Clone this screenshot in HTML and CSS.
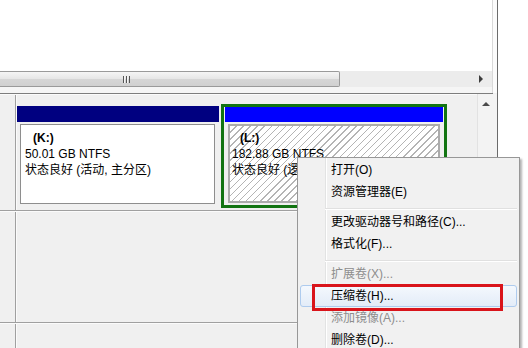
FILE: index.html
```html
<!DOCTYPE html>
<html>
<head>
<meta charset="utf-8">
<link rel="stylesheet" href="styles.css">
</head>
<body>
<div class="screen">
  <div class="win">
    <div class="upper">
      <div class="list"></div>
      <div class="edge"></div>
    </div>
    <div class="hbar">
      <div class="hscroll">
        <div class="thumb"><span class="grip"></span></div>
        <div class="track"></div>
        <div class="arrow-cell"><span class="arrow-right"></span></div>
      </div>
      <div class="edge"></div>
    </div>
    <div class="gap">
      <div class="gap-main"></div>
      <div class="edge"></div>
    </div>
    <div class="divider"></div>
    <div class="lower">
      <div class="rows">
        <div class="row disk-row">
          <div class="label-col"></div>
          <div class="parts">
            <div class="part part-k">
              <div class="cap cap-primary"></div>
              <div class="box">
                <div class="vol">(K:)</div>
                <div>50.01 GB NTFS</div>
                <div>状态良好 (活动, 主分区)</div>
              </div>
            </div>
            <div class="part part-l">
              <div class="cap cap-logical"></div>
              <div class="box hatch">
                <div class="vol">(L:)</div>
                <div>182.88 GB NTFS</div>
                <div>状态良好 (逻辑驱动器)</div>
              </div>
            </div>
          </div>
        </div>
        <div class="row empty-row">
          <div class="label-col"></div>
        </div>
        <div class="row last-row">
          <div class="label-col"></div>
        </div>
      </div>
      <div class="vscroll"><span class="arrow-up"></span></div>
    </div>
  </div>
  <div class="outside"></div>
</div>

<div class="menu">
  <div class="mi">打开(O)</div>
  <div class="mi">资源管理器(E)</div>
  <div class="sep"></div>
  <div class="mi">更改驱动器号和路径(C)...</div>
  <div class="mi">格式化(F)...</div>
  <div class="sep"></div>
  <div class="mi off">扩展卷(X)...</div>
  <div class="mi hot">压缩卷(H)...</div>
  <div class="mi off">添加镜像(A)...</div>
  <div class="mi">删除卷(D)...</div>
</div>
<div class="callout"></div>
</body>
</html>
```

FILE: styles.css
```css
* { box-sizing: border-box; }
html, body { margin: 0; padding: 0; }
body {
  width: 528px;
  height: 348px;
  overflow: hidden;
  position: relative;
  background: #fff;
  font-family: "Liberation Sans", "Noto Sans CJK SC", sans-serif;
  font-size: 12px;
  color: #000;
}
.screen { display: flex; height: 348px; }
.win {
  width: 498px;
  border-right: 1px solid #6b6b6b;
  display: flex;
  flex-direction: column;
  background: #f0f0f0;
}
.outside { flex: 1; background: #fff; }

.upper { height: 71px; display: flex; background: #fff; }
.list { width: 493px; border-right: 1px solid #d9d9d9; background: #fff; }
.edge { flex: 1; background: #fbfbfb; }

.hbar { height: 16px; display: flex; }
.hscroll {
  width: 493px;
  display: flex;
  background: #ececec;
  border-right: 1px solid #d9d9d9;
}
.thumb {
  width: 340px;
  height: 16px;
  border: 1px solid #9a9a9a;
  border-left: none;
  border-radius: 0 2px 2px 0;
  background: linear-gradient(#f5f5f5, #e6e6e6 50%, #d6d6d6 50%, #d0d0d0);
  display: flex;
  align-items: center;
  padding-left: 123px;
}
.grip {
  width: 7px;
  height: 7px;
  background: repeating-linear-gradient(90deg, #555 0 1px, #f4f4f4 1px 2px, transparent 2px 3px);
}
.track { flex: 1; }
.arrow-cell {
  width: 16px;
  display: flex;
  align-items: center;
  padding-left: 3px;
}
.arrow-right {
  width: 0;
  height: 0;
  border-left: 4px solid #3c3c3c;
  border-top: 4px solid transparent;
  border-bottom: 4px solid transparent;
}

.gap { height: 6px; display: flex; }
.gap-main { width: 493px; background: #f5f5f5; border-right: 1px solid #d9d9d9; }
.divider { height: 1px; width: 493px; background: #7d7d7d; }

.lower { flex: 1; display: flex; }
.rows { width: 477px; display: flex; flex-direction: column; }
.row { display: flex; }
.label-col {
  width: 16px;
  border-right: 1px solid #a0a0a0;
  box-shadow: 1px 0 0 #fbfbfb;
}
.disk-row {
  height: 117px;
  border-bottom: 1px solid #a0a0a0;
  border-top: 1px solid #fbfbfb;
}
.empty-row {
  height: 112px;
  border-top: 1px solid #fbfbfb;
  border-bottom: 1px solid #a0a0a0;
}
.last-row { flex: 1; border-top: 1px solid #fbfbfb; }

.parts {
  display: flex;
  align-items: flex-start;
  padding: 9px 0 0 1px;
}
.part { display: flex; flex-direction: column; }
.part-k { width: 202px; margin-top: 2px; }
.part-l {
  width: 226px;
  margin-left: 2px;
  border: 3px solid #127412;
  padding: 0 1px 2px;
}
.cap { height: 16px; }
.cap-primary { background: #000080; }
.cap-logical { height: 15px; background: #0000ff; }
.box {
  height: 80px;
  margin: 2px 4px 0 3px;
  background: #fff;
  border: 1px solid #8e8e8e;
  padding: 5px 0 0 4px;
  line-height: 16px;
  white-space: nowrap;
  overflow: hidden;
}
.vol { font-weight: bold; padding-left: 8px; }
.hatch {
  height: 79px;
  margin: 2px 3px 0 3px;
  border: 2px solid #ababab;
  padding: 4px 0 0 2px;
  background: repeating-linear-gradient(135deg, #fff 0 4px, #b4b4b4 4px 5px);
}

.vscroll {
  width: 20px;
  border-left: 1px solid #e2e2e2;
  background: #f3f3f3;
  padding: 8px 0 0 4px;
}
.arrow-up {
  display: block;
  width: 0;
  height: 0;
  border-bottom: 4px solid #4a4a4a;
  border-left: 4px solid transparent;
  border-right: 4px solid transparent;
}

.menu {
  position: absolute;
  left: 297px;
  top: 157px;
  width: 223px;
  height: 200px;
  border: 1px solid #979797;
  padding-top: 1px;
  background: linear-gradient(90deg, #f1f1f1 0 27px, #e2e3e3 27px 28px, #fff 28px 29px, #f1f1f1 29px);
  box-shadow: 2px 2px 2px rgba(0, 0, 0, 0.3);
}
.mi {
  height: 22px;
  margin: 0 2px;
  padding-left: 30px;
  border: 1px solid transparent;
  border-radius: 3px;
  line-height: 20px;
  white-space: nowrap;
}
.mi.off { color: #8d8d8d; }
.mi.hot {
  border-color: #aecbee;
  background: linear-gradient(#f4f8fd, #e3ecf8);
}
.sep {
  height: 8px;
  margin: 0 2px 0 27px;
  background: linear-gradient(transparent 5px, #e0e0e0 5px 6px, #fff 6px 7px, transparent 7px);
}
.callout {
  position: absolute;
  left: 312px;
  top: 284px;
  width: 191px;
  height: 27px;
  border: 3px solid #d9141b;
}
```
